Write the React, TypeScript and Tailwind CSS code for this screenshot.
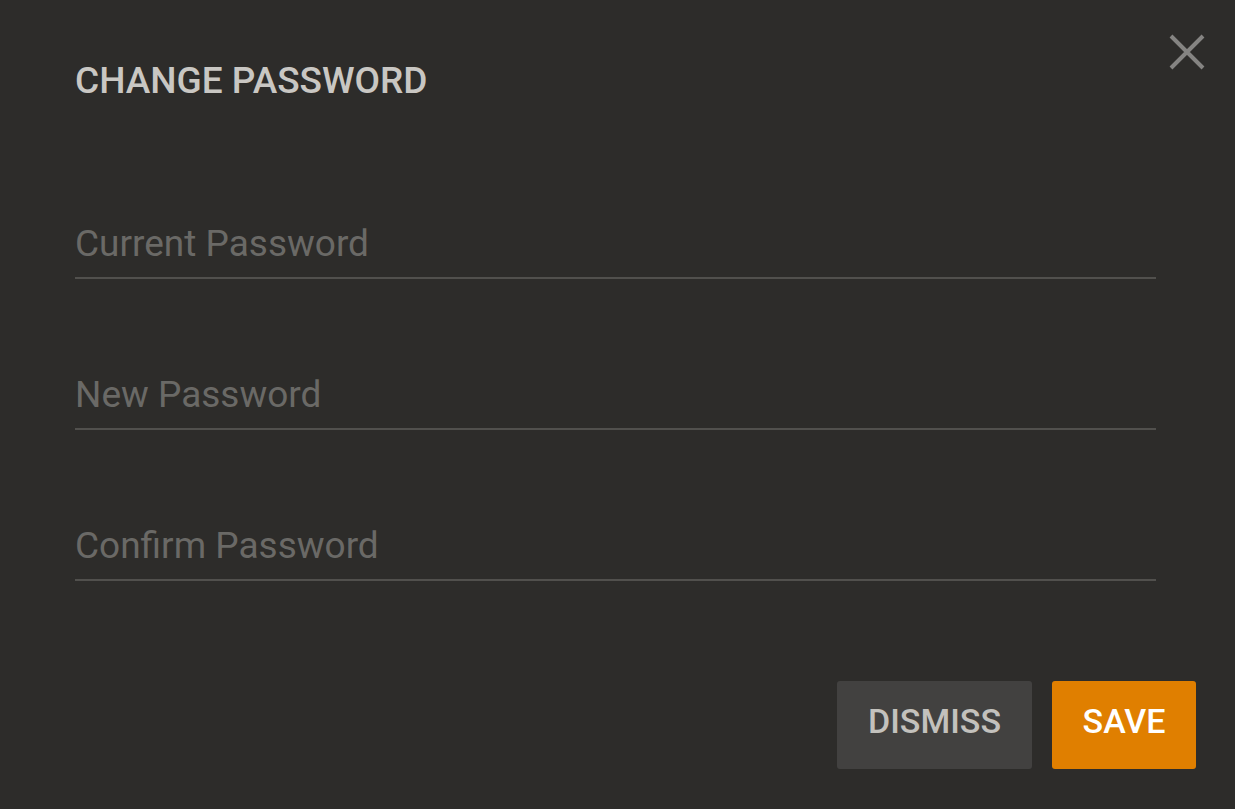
import React, { useState } from 'react';

// Change-password dialog: title, three underline fields, dismiss / save actions.

const fields = [
  { id: 'current', label: 'Current Password' },
  { id: 'new', label: 'New Password' },
  { id: 'confirm', label: 'Confirm Password' },
];

const PasswordField: React.FC<{ id: string; label: string; value: string; onChange: (v: string) => void }> = ({
  id,
  label,
  value,
  onChange,
}) => (
  <input
    id={id}
    type="password"
    placeholder={label}
    value={value}
    onChange={(e) => onChange(e.target.value)}
    className="block h-[57px] w-full border-b-2 border-[#51504d] bg-transparent pb-[13px] text-[37px] leading-[42px] text-[#d0cec9] outline-none placeholder:text-[#6a6966] focus:border-[#e07f00]"
  />
);

export default function App() {
  const [values, setValues] = useState<Record<string, string>>({});

  return (
    <div
      className="relative min-h-screen w-full bg-[#2d2c2a]"
      style={{ fontFamily: 'Roboto, "Noto Sans", sans-serif' }}
    >
      <button
        type="button"
        aria-label="Close"
        className="absolute right-[28px] top-[32px] flex h-[40px] w-[40px] items-center justify-center"
      >
        <svg width="36" height="36" viewBox="0 0 36 36" fill="none" stroke="#858482" strokeWidth="4" strokeLinecap="butt">
          <path d="M2 2 L34 34 M34 2 L2 34" />
        </svg>
      </button>

      <div className="pl-[75px] pr-[79px] pt-[60px]">
        <h1 className="text-[37px] font-medium leading-[42px] text-[#c9c7c3]">CHANGE PASSWORD</h1>

        <div className="mt-[120px] flex flex-col gap-[94px]">
          {fields.map((f) => (
            <PasswordField
              key={f.id}
              id={f.id}
              label={f.label}
              value={values[f.id] ?? ''}
              onChange={(v) => setValues((prev) => ({ ...prev, [f.id]: v }))}
            />
          ))}
        </div>
      </div>

      <div className="mt-[100px] flex justify-end gap-[20px] pr-[39px]">
        <button
          type="button"
          className="h-[88px] w-[195px] rounded-[3px] bg-[#424140] pb-[8px] text-[34px] font-medium text-[#c3c1bd]"
        >
          DISMISS
        </button>
        <button
          type="button"
          className="h-[88px] w-[144px] rounded-[3px] bg-[#e07f00] pb-[8px] text-[34px] font-medium text-white"
        >
          SAVE
        </button>
      </div>
    </div>
  );
}
